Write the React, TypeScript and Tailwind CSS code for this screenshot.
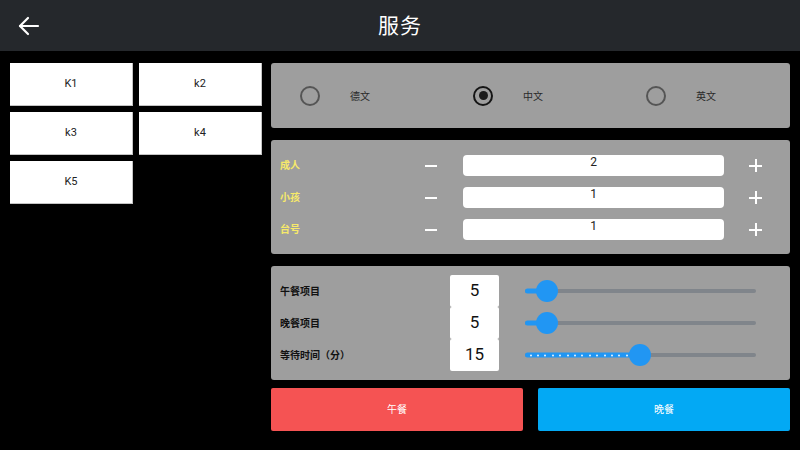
import React from 'react';

const tables = ['K1', 'k2', 'k3', 'k4', 'K5'];

const languages = [
  { label: '德文', checked: false },
  { label: '中文', checked: true },
  { label: '英文', checked: false },
];

const counters = [
  { label: '成人', value: 2 },
  { label: '小孩', value: 1 },
  { label: '台号', value: 1 },
];

const settings = [
  { label: '午餐项目', value: 5, pos: 22, ticks: false },
  { label: '晚餐项目', value: 5, pos: 22, ticks: false },
  { label: '等待时间（分）', value: 15, pos: 115, ticks: true },
];

const font = 'font-["Roboto","Noto_Sans_CJK_SC",sans-serif]';

const Radio = ({ checked }: { checked: boolean }) =>
  checked ? (
    <span className="w-[20px] h-[20px] rounded-full border-[2.5px] border-[#151515] flex items-center justify-center">
      <span className="w-[9px] h-[9px] rounded-full bg-[#1c1c1c]" />
    </span>
  ) : (
    <span className="w-[20px] h-[20px] rounded-full border-2 border-[#555]" />
  );

const Slider = ({ pos, ticks }: { pos: number; ticks: boolean }) => (
  <div className="relative w-[231px] h-[24px] flex items-center">
    <div className="w-full h-[4px] bg-[#80858b] rounded-full" />
    <div
      className="absolute left-0 top-1/2 -translate-y-1/2 h-[5px] bg-[#2196f3] rounded-full flex items-center justify-around px-[2px]"
      style={{ width: pos }}
    >
      {ticks &&
        Array.from({ length: 15 }).map((_, i) => (
          <span key={i} className="w-[2px] h-[2px] rounded-full bg-white/90" />
        ))}
    </div>
    <div
      className="absolute top-1/2 -translate-y-1/2 -translate-x-1/2 w-[22px] h-[22px] rounded-full bg-[#2196f3]"
      style={{ left: pos }}
    />
  </div>
);

export default function App() {
  return (
    <div className={`w-[800px] h-[450px] bg-black flex flex-col overflow-hidden ${font}`}>
      <header className="h-[51px] shrink-0 bg-[#25282c] grid grid-cols-[1fr_auto_1fr] items-center">
        <div className="pl-[17px]">
          <svg width="23" height="22" viewBox="0 0 23 22" fill="none" stroke="white" strokeWidth="2.2" strokeLinecap="round" strokeLinejoin="round">
            <path d="M21 11H3" />
            <path d="M11 3L3 11L11 19" />
          </svg>
        </div>
        <h1 className="text-white text-[21px] leading-none tracking-[1px] pt-[2px]">服务</h1>
        <div />
      </header>

      <div className="flex pt-[12px] pl-[10px] pr-[10px] gap-[9px]">
        <div className="grid grid-cols-[123px_123px] auto-rows-[43px] gap-[6px] content-start w-[252px]">
          {tables.map((t) => (
            <button key={t} className="bg-white text-[#222] text-[11px] border-b border-r border-[#c4c4c4]">
              {t}
            </button>
          ))}
        </div>

        <div className="flex-1 flex flex-col">
          <div className="h-[65px] rounded-[3px] bg-[#9e9e9e] grid grid-cols-3">
            {languages.map((l) => (
              <div key={l.label} className="flex items-center pl-[29px] gap-[30px]">
                <Radio checked={l.checked} />
                <span className="text-[10px] text-[#2a2a2a] pt-[1px]">{l.label}</span>
              </div>
            ))}
          </div>

          <div className="mt-[12px] h-[114px] rounded-[3px] bg-[#9e9e9e] py-[15px] pl-[9px] flex flex-col gap-[11px]">
            {counters.map((c) => (
              <div key={c.label} className="h-[21px] flex items-center">
                <span className="w-[145px] text-[10px] font-bold text-[#f6e96a]">{c.label}</span>
                <span className="w-[12px] h-[2px] bg-white" />
                <div className="ml-[26px] w-[261px] h-[21px] bg-white rounded-[4px] text-center text-[12px] leading-[14px] text-[#222]">
                  {c.value}
                </div>
                <span className="ml-[25px] relative w-[13px] h-[13px] flex items-center justify-center">
                  <span className="absolute w-[13px] h-[2px] bg-white" />
                  <span className="absolute w-[2px] h-[13px] bg-white" />
                </span>
              </div>
            ))}
          </div>

          <div className="mt-[12px] h-[114px] rounded-[3px] bg-[#9e9e9e] py-[9px] pl-[9px] flex flex-col">
            {settings.map((s) => (
              <div key={s.label} className="h-[32px] flex items-center">
                <span className="w-[170px] text-[10px] font-bold text-[#111]">{s.label}</span>
                <div className="w-[49px] h-[32px] bg-white rounded-[2px] flex items-center justify-center text-[17px] text-[#111]">
                  {s.value}
                </div>
                <div className="ml-[26px]">
                  <Slider pos={s.pos} ticks={s.ticks} />
                </div>
              </div>
            ))}
          </div>

          <div className="mt-[8px] h-[43px] grid grid-cols-2 gap-[15px]">
            <button className="bg-[#f55353] text-white text-[10px] rounded-[2px]">午餐</button>
            <button className="bg-[#03a9f4] text-white text-[10px] rounded-[2px]">晚餐</button>
          </div>
        </div>
      </div>
    </div>
  );
}
